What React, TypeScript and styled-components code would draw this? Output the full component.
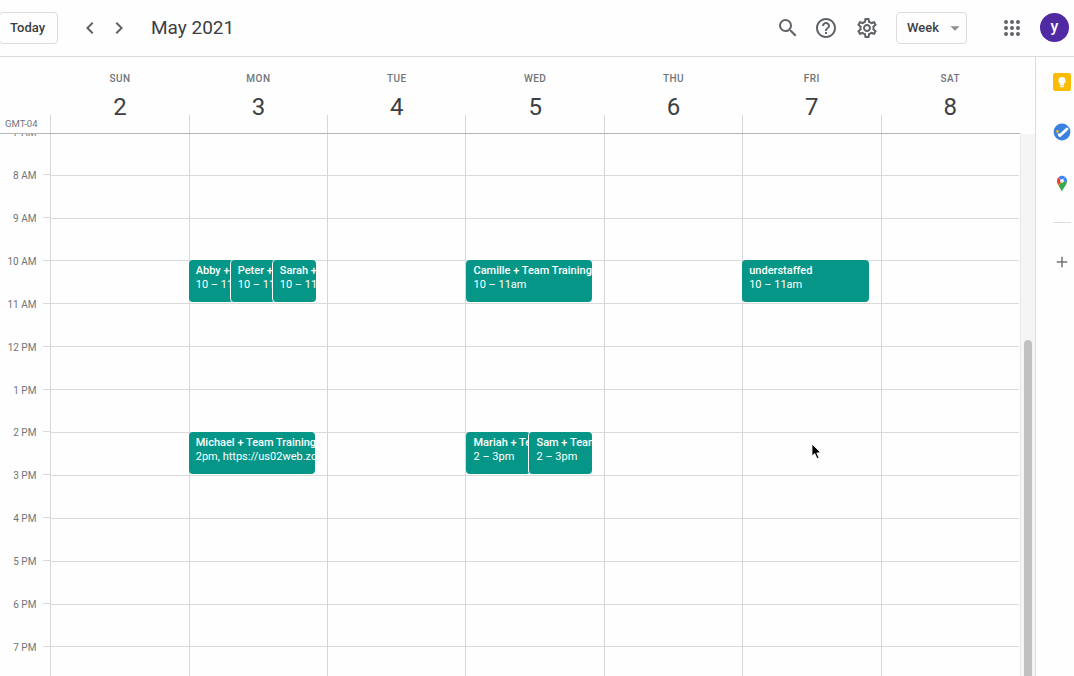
import React from "react";
import styled, { createGlobalStyle } from "styled-components";
import { MdSearch, MdHelpOutline, MdOutlineSettings, MdArrowDropDown, MdChevronLeft, MdChevronRight, MdAdd } from "react-icons/md";

const HOUR = 42.9;
const DAY_WIDTH = 138.36;
const TIME_WIDTH = 50.4;

const GlobalStyle = createGlobalStyle`
  html, body {
    margin: 0;
    background: #fefefe;
    font-family: Roboto, "Liberation Sans", sans-serif;
  }
`;

const Page = styled.div`
  position: relative;
  width: 1074px;
  height: 676px;
  overflow: hidden;
  display: flex;
  flex-direction: column;
  background: #fefefe;
`;

const TopBar = styled.header`
  box-sizing: border-box;
  height: 57px;
  flex: none;
  padding-bottom: 1px;
  display: flex;
  align-items: center;
  border-bottom: 1px solid #dadce0;
  color: #3c4043;
`;

const OutlineButton = styled.div`
  box-sizing: border-box;
  height: 32px;
  border: 1px solid #dadce0;
  border-radius: 4px;
  display: flex;
  align-items: center;
  font-size: 13px;
  font-weight: 500;
  color: #3c4043;
`;

const TodayButton = styled(OutlineButton)`
  width: 59px;
  margin-left: -1px;
  padding-left: 10px;
`;

const NavIcon = styled.div`
  width: 29px;
  display: flex;
  justify-content: center;
  color: #5f6368;
  font-size: 24px;
`;

const NavGroup = styled.div`
  display: flex;
  margin-left: 17px;
`;

const MonthTitle = styled.div`
  margin-left: 18px;
  font-size: 19px;
  color: #3c4043;
`;

const Actions = styled.div`
  margin-left: auto;
  display: flex;
  align-items: center;
`;

const ActionIcon = styled.div<{ $gap: number }>`
  display: flex;
  color: #5f6368;
  font-size: 24px;
  margin-right: ${(p) => p.$gap}px;
`;

const WeekButton = styled(OutlineButton)`
  width: 71px;
  padding-left: 10px;
  justify-content: space-between;
  margin-right: 33px;
  svg {
    color: #8a8d91;
    font-size: 22px;
    flex: none;
  }
`;

const Avatar = styled.div`
  width: 29px;
  height: 29px;
  border-radius: 50%;
  background: #4f2aa3;
  color: #fff;
  font-size: 16px;
  font-weight: 500;
  display: flex;
  align-items: center;
  justify-content: center;
  margin-right: 5px;
  padding-bottom: 2px;
  box-sizing: border-box;
`;

const Body = styled.div`
  flex: 1;
  min-height: 0;
  display: flex;
`;

const Main = styled.main`
  flex: 1;
  min-width: 0;
  display: flex;
  flex-direction: column;
`;

const WeekHeader = styled.div`
  height: 77px;
  flex: none;
  box-sizing: border-box;
  display: flex;
  width: 1020px;
  border-bottom: 1px solid #b4b6b8;
`;

const GmtCell = styled.div`
  width: ${TIME_WIDTH}px;
  flex: none;
  box-sizing: border-box;
  padding: 61px 0 0 5px;
  font-size: 9.5px;
  line-height: 11px;
  color: #70757a;
`;

const DayHeads = styled.div`
  flex: 1;
  display: grid;
  grid-template-columns: repeat(7, ${DAY_WIDTH}px);
`;

const DayHead = styled.div`
  position: relative;
  display: flex;
  flex-direction: column;
  align-items: center;
  padding: 16px 0 0 1px;
  &::before {
    content: "";
    position: absolute;
    left: 0;
    bottom: 0;
    height: 18px;
    width: 1px;
    background: #d6d7de;
  }
`;

const DayName = styled.div`
  font-size: 10px;
  line-height: 12px;
  font-weight: 500;
  letter-spacing: 0.5px;
  color: #70757a;
`;

const DayNumber = styled.div`
  font-size: 24px;
  line-height: 30px;
  margin-top: 7px;
  color: #3c4043;
`;

const GridArea = styled.div`
  flex: 1;
  min-height: 0;
  display: flex;
  overflow: hidden;
`;

const Scroller = styled.div`
  width: 1020px;
  flex: none;
  overflow: hidden;
`;

const ScrollContent = styled.div`
  display: flex;
  margin-top: -2.25px;
`;

const TimeColumn = styled.div`
  width: ${TIME_WIDTH}px;
  flex: none;
  margin-top: ${-HOUR / 2}px;
`;

const TimeRow = styled.div`
  height: ${HOUR}px;
  display: flex;
  align-items: center;
  justify-content: flex-end;
  gap: 7px;
`;

const TimeLabel = styled.span`
  font-size: 10px;
  margin-top: 2px;
  color: #70757a;
  white-space: nowrap;
`;

const TimeTick = styled.span`
  width: 7px;
  height: 1px;
  background: #dadada;
`;

const Days = styled.div`
  flex: 1;
  display: grid;
  grid-template-columns: repeat(7, ${DAY_WIDTH}px);
`;

const DayColumn = styled.div`
  position: relative;
  box-sizing: border-box;
  border-left: 1px solid #d6d7de;
  height: 560px;
`;

const HourSlot = styled.div`
  box-sizing: border-box;
  height: ${HOUR}px;
  border-top: 1px solid #dadada;
`;

const EventCard = styled.div<{ $hour: number; $left: number; $width: number; $outlined?: boolean }>`
  position: absolute;
  top: ${(p) => (p.$hour - 7) * HOUR}px;
  left: ${(p) => p.$left}px;
  width: ${(p) => p.$width}px;
  height: 42px;
  box-sizing: border-box;
  overflow: hidden;
  padding: 4px 0 0 7px;
  border-radius: 4px;
  background: #069688;
  color: #fff;
  font-size: 11px;
  line-height: 14px;
  white-space: nowrap;
  border-left: ${(p) => (p.$outlined ? "1px solid #fff" : "none")};
`;

const EventTitle = styled.div`
  font-weight: 500;
`;

const Track = styled.div`
  flex: 1;
  display: flex;
  flex-direction: column;
  background: #f5f5f6;
  border-left: 1px solid #e8e8e8;
`;

const Thumb = styled.div`
  width: 8px;
  margin: 206px 0 0 3px;
  flex: 1;
  background: #c1c1c1;
  border-radius: 4px 4px 0 0;
`;

const SidePanel = styled.aside`
  width: 39px;
  flex: none;
  box-sizing: border-box;
  border-left: 1px solid #dadce0;
  display: flex;
  flex-direction: column;
  align-items: center;
  padding: 15px 0 0 13px;
`;

const SideIcon = styled.div<{ $gap: number }>`
  display: flex;
  margin-bottom: ${(p) => p.$gap}px;
`;

const SideRule = styled.div`
  width: 18px;
  height: 1px;
  background: #dadce0;
  margin-bottom: 30px;
`;

const PlusIcon = styled.div`
  display: flex;
  color: #70757a;
  font-size: 18px;
`;

const CursorMark = styled.svg`
  position: absolute;
  left: 811px;
  top: 443px;
`;

const AppsIcon = () => (
  <svg width="24" height="24" viewBox="0 0 24 24" fill="#5f6368">
    {[6, 12, 18].flatMap((y) =>
      [6, 12, 18].map((x) => <circle key={`${x}-${y}`} cx={x} cy={y} r="2" />)
    )}
  </svg>
);

const KeepIcon = () => (
  <svg width="20" height="20" viewBox="0 0 20 20">
    <rect x="1" y="1" width="18" height="18" rx="2.5" fill="#fbbc04" />
    <circle cx="10" cy="8.5" r="3.6" fill="#fff" />
    <rect x="8" y="11.5" width="4" height="2" fill="#fff" />
    <rect x="8.2" y="14" width="3.6" height="1.2" fill="#fff" />
  </svg>
);

const TasksIcon = () => (
  <svg width="20" height="20" viewBox="0 0 20 20">
    <circle cx="10" cy="10" r="8.4" fill="#3b82e0" />
    <path d="M8 13.6 L15 7" stroke="#fff" strokeWidth="2.8" strokeLinecap="round" />
    <path d="M8 13.6 L6.8 12.4" stroke="#fff" strokeWidth="2.2" strokeLinecap="round" />
    <circle cx="5.4" cy="9.4" r="1.3" fill="#fbbc04" />
  </svg>
);

const MapsIcon = () => (
  <svg width="20" height="20" viewBox="0 0 20 20">
    <path d="M10 18.4 C9 15 5 12.6 5 7.8 L10 9 Z" fill="#fbbc04" />
    <path d="M10 18.4 C11 15 15 12.6 15 7.8 L10 9 L6.6 12.4 Z" fill="#34a853" />
    <path d="M5 7.8 C5 6.4 5.6 5.2 6.4 4.4 L10 8 L6.6 12 C5.6 10.8 5 9.4 5 7.8 Z" fill="#ea4335" />
    <path d="M6.4 4.4 C7.4 3.4 8.6 2.8 10 2.8 C11.2 2.8 12.2 3.2 13 3.8 L10 8 Z" fill="#4285f4" />
    <path d="M13 3.8 C14.2 4.6 15 6.1 15 7.8 L11 9.6 L10 8 Z" fill="#4285f4" />
    <circle cx="10" cy="7.8" r="1.9" fill="#fff" />
  </svg>
);

const HOURS = ["7 AM", "8 AM", "9 AM", "10 AM", "11 AM", "12 PM", "1 PM", "2 PM", "3 PM", "4 PM", "5 PM", "6 PM", "7 PM", "8 PM"];

const WEEK = [
  { name: "SUN", date: 2, events: [] },
  {
    name: "MON",
    date: 3,
    events: [
      { title: "Abby + Team Training", time: "10 – 11am", hour: 10, left: -1, width: 44 },
      { title: "Peter + Team Training", time: "10 – 11am", hour: 10, left: 40, width: 45, outlined: true },
      { title: "Sarah + Team Training", time: "10 – 11am", hour: 10, left: 82, width: 44, outlined: true },
      { title: "Michael + Team Training", time: "2pm, https://us02web.zoom.us", hour: 14, left: -1, width: 126 },
    ],
  },
  { name: "TUE", date: 4, events: [] },
  {
    name: "WED",
    date: 5,
    events: [
      { title: "Camille + Team Training", time: "10 – 11am", hour: 10, left: 0, width: 126 },
      { title: "Mariah + Team Training", time: "2 – 3pm", hour: 14, left: 0, width: 64 },
      { title: "Sam + Team Training", time: "2 – 3pm", hour: 14, left: 62, width: 64, outlined: true },
    ],
  },
  { name: "THU", date: 6, events: [] },
  {
    name: "FRI",
    date: 7,
    events: [{ title: "understaffed", time: "10 – 11am", hour: 10, left: -1, width: 127 }],
  },
  { name: "SAT", date: 8, events: [] },
];

export default function App() {
  return (
    <Page>
      <GlobalStyle />
      <TopBar>
        <TodayButton>Today</TodayButton>
        <NavGroup>
          <NavIcon><MdChevronLeft /></NavIcon>
          <NavIcon><MdChevronRight /></NavIcon>
        </NavGroup>
        <MonthTitle>May 2021</MonthTitle>
        <Actions>
          <ActionIcon $gap={14}><MdSearch /></ActionIcon>
          <ActionIcon $gap={17}><MdHelpOutline /></ActionIcon>
          <ActionIcon $gap={17}><MdOutlineSettings /></ActionIcon>
          <WeekButton>
            Week
            <MdArrowDropDown />
          </WeekButton>
          <ActionIcon $gap={16}><AppsIcon /></ActionIcon>
          <Avatar>y</Avatar>
        </Actions>
      </TopBar>
      <Body>
        <Main>
          <WeekHeader>
            <GmtCell>GMT-04</GmtCell>
            <DayHeads>
              {WEEK.map((day) => (
                <DayHead key={day.name}>
                  <DayName>{day.name}</DayName>
                  <DayNumber>{day.date}</DayNumber>
                </DayHead>
              ))}
            </DayHeads>
          </WeekHeader>
          <GridArea>
            <Scroller>
              <ScrollContent>
                <TimeColumn>
                  {HOURS.map((h) => (
                    <TimeRow key={h}>
                      <TimeLabel>{h}</TimeLabel>
                      <TimeTick />
                    </TimeRow>
                  ))}
                </TimeColumn>
                <Days>
                  {WEEK.map((day) => (
                    <DayColumn key={day.name}>
                      {HOURS.map((h) => (
                        <HourSlot key={h} />
                      ))}
                      {day.events.map((ev) => (
                        <EventCard key={ev.title} $hour={ev.hour} $left={ev.left} $width={ev.width} $outlined={ev.outlined}>
                          <EventTitle>{ev.title}</EventTitle>
                          <div>{ev.time}</div>
                        </EventCard>
                      ))}
                    </DayColumn>
                  ))}
                </Days>
              </ScrollContent>
            </Scroller>
            <Track>
              <Thumb />
            </Track>
          </GridArea>
        </Main>
        <SidePanel>
          <SideIcon $gap={30}><KeepIcon /></SideIcon>
          <SideIcon $gap={31}><TasksIcon /></SideIcon>
          <SideIcon $gap={29}><MapsIcon /></SideIcon>
          <SideRule />
          <PlusIcon><MdAdd /></PlusIcon>
        </SidePanel>
      </Body>
      <CursorMark width="12" height="18" viewBox="0 0 12 18">
        <path d="M1 1 L1 13 L3.8 10.6 L6 15.6 L8 14.8 L5.8 10 L9.6 9.6 Z" fill="#000" stroke="#fff" strokeWidth="0.8" />
      </CursorMark>
    </Page>
  );
}
